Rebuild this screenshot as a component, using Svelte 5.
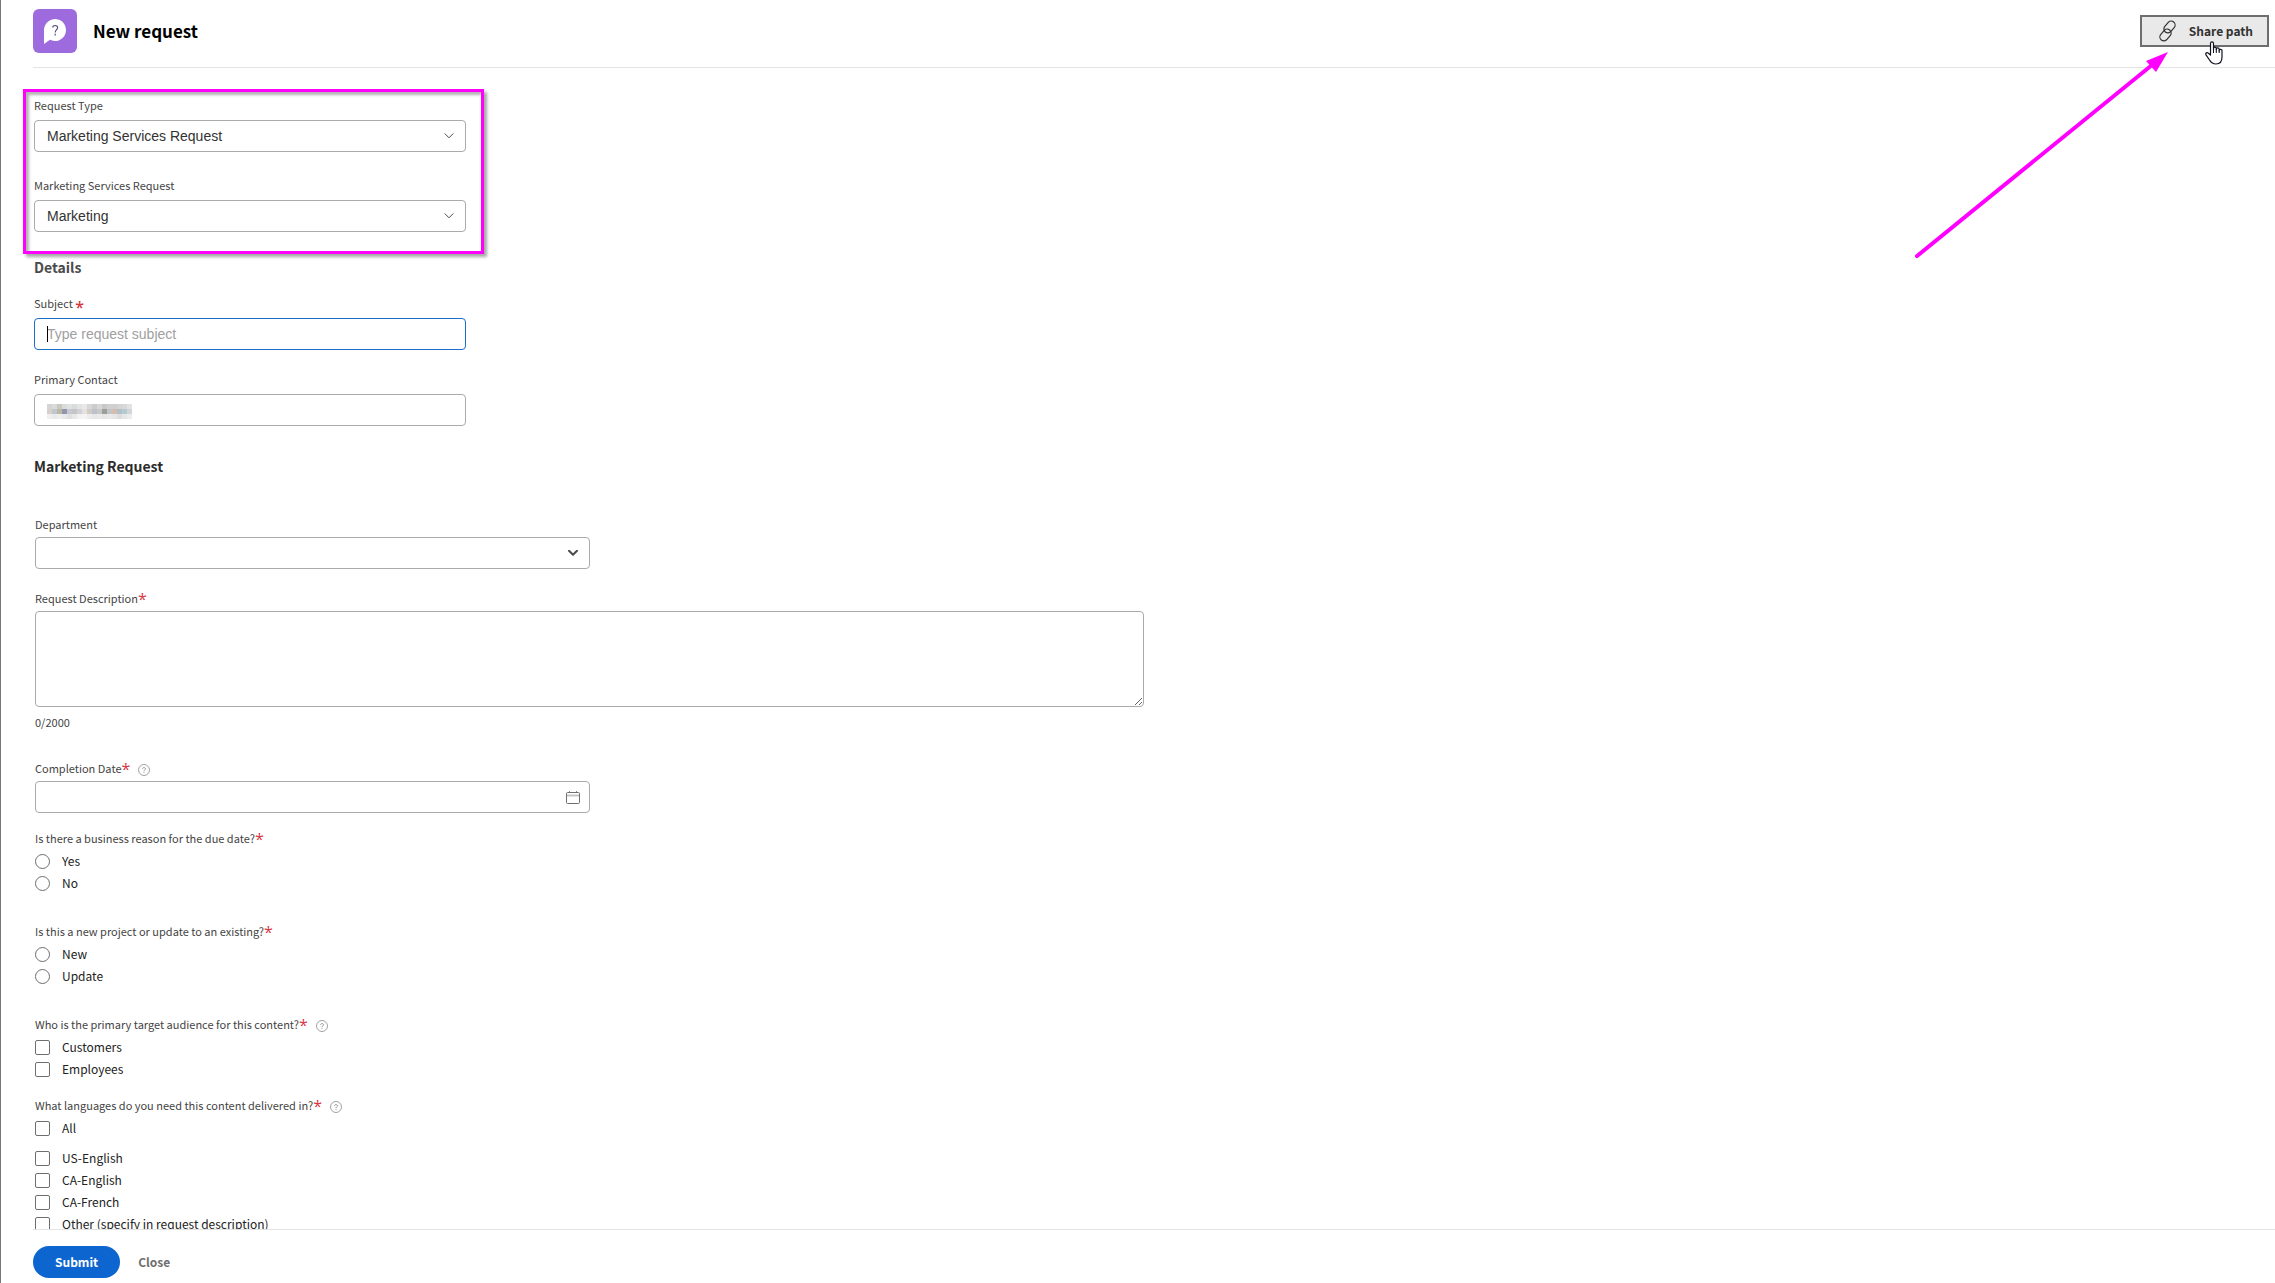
<script>
  let requestType = $state('Marketing Services Request')
  let service = $state('Marketing')
  let department = $state('')
  let description = $state('')

  const choices = [
    { id: 'reason', type: 'radio', label: 'Is there a business reason for the due date?', options: ['Yes', 'No'] },
    { id: 'project', type: 'radio', label: 'Is this a new project or update to an existing?', options: ['New', 'Update'], gap: 'wide' },
    { id: 'audience', type: 'checkbox', label: 'Who is the primary target audience for this content?', help: true, options: ['Customers', 'Employees'], gap: 'wide' },
    {
      id: 'languages',
      type: 'checkbox',
      label: 'What languages do you need this content delivered in?',
      help: true,
      all: true,
      options: ['US-English', 'CA-English', 'CA-French', 'Other (specify in request description)']
    }
  ]

  // blocked-out contact name, one row of shades per line of blocks
  const mosaic = [
    '#d4d4d6 #dadada #c8cabc #d8dcda #dfe2e2 #d9dcda #e4e4e4 #e8e8e8 #d8d8d8 #cccccc #d6d6d8 #c8c8c8 #d0d0d0 #cfcfcf #d4d4d4 #d8d8d8 #e2e2e2',
    '#d6d0c8 #c2c6d0 #b8baa4 #9494ac #c8c8d0 #c4c4c8 #d2d2d6 #e2e2e2 #d4ccc4 #bcc2cc #c8c8c8 #98a098 #c0c4c8 #d4bcb0 #b4c0c8 #b4ccd0 #d2d6d8',
    '#f0f0f0 #eaeaec #eeeeee #e8e8ea #e0e0e2 #e8e8e8 #f2f2f2 #f4f4f4 #ececec #e8e8e8 #eaeaea #e6e6e6 #eaeaea #e6e6e6 #dedee0 #e6e6e6 #ececec'
  ].map((row) => row.split(' '))
</script>

{#snippet chevron()}
  <svg class="chevron" viewBox="0 0 10 6" aria-hidden="true">
    <path d="M1 .8 5 4.8 9 .8" fill="none" stroke="currentColor" stroke-linecap="round" stroke-linejoin="round" />
  </svg>
{/snippet}

{#snippet help()}
  <button class="help" type="button" aria-label="Help">
    <svg viewBox="0 0 12 12" aria-hidden="true">
      <circle cx="6" cy="6" r="5.5" fill="none" stroke="currentColor" stroke-width=".8" />
      <path d="M4.5 4.7C4.5 3.2 7.5 3.2 7.5 4.8 7.5 5.8 6 5.9 6 7.2M6 8.2v.9" fill="none" stroke="currentColor" stroke-width=".9" />
    </svg>
  </button>
{/snippet}

{#snippet option(group, name)}
  <label class="option">
    <input type={group.type} name={group.id} value={name} />
    <span>{name}</span>
  </label>
{/snippet}

<div class="page">
  <header>
    <div class="badge">
      <svg viewBox="0 0 44 44" aria-hidden="true">
        <path d="M11 35V21a11 11 0 1 1 6 9.800L11 35Z" fill="#fff" />
        <path d="M19.700 18.400C19.700 15.800 24.600 15.800 24.600 18.600 24.600 21 22.200 21 22.200 23.600" fill="none" stroke="#4f4478" stroke-width="1.1" />
        <path d="M22.200 24.800v1.600" stroke="#4f4478" stroke-width="1.2" />
      </svg>
    </div>
    <h1>New request</h1>
    <button class="share" type="button">
      <svg viewBox="0 0 18 24" aria-hidden="true">
        <g fill="none" stroke="currentColor" stroke-width="1.2">
          <rect x="4" y="4" width="13" height="8" rx="4" transform="rotate(-50 10.5 8)" />
          <rect x="0" y="12" width="13" height="8" rx="4" transform="rotate(-50 6.5 16)" />
        </g>
      </svg>
      Share path
    </button>
  </header>

  <main>
    <form id="request">
      <section class="general">
        <div class="field">
          <label for="type">Request Type</label>
          <div class="control">
            <select id="type" bind:value={requestType}>
              <option>Marketing Services Request</option>
            </select>
            {@render chevron()}
          </div>
        </div>
        <div class="field service">
          <label for="service">Marketing Services Request</label>
          <div class="control">
            <select id="service" bind:value={service}>
              <option>Marketing</option>
            </select>
            {@render chevron()}
          </div>
        </div>

        <h2 class="details">Details</h2>
        <div class="field">
          <label for="subject">Subject <span class="star">*</span></label>
          <div class="control">
            <input id="subject" class="focused" type="text" placeholder="Type request subject" />
            <span class="caret"></span>
          </div>
        </div>
        <div class="field contact">
          <label for="contact">Primary Contact</label>
          <div class="control">
            <input id="contact" type="text" />
            <svg class="mosaic" viewBox="0 0 17 3" shape-rendering="crispEdges" aria-hidden="true">
              {#each mosaic as row, y}
                {#each row as shade, x}
                  <rect {x} {y} width="1" height="1" fill={shade} />
                {/each}
              {/each}
            </svg>
          </div>
        </div>
      </section>

      <h2 class="custom-title">Marketing Request</h2>
      <section class="custom">
        <div class="field">
          <label for="department">Department</label>
          <div class="control half">
            <select id="department" bind:value={department}>
              <option value=""></option>
            </select>
            {@render chevron()}
          </div>
        </div>
        <div class="field description">
          <label for="description">Request Description<span class="star">*</span></label>
          <textarea id="description" maxlength="2000" bind:value={description}></textarea>
          <p class="counter">{description.length}/2000</p>
        </div>
        <div class="field date">
          <div class="caption">
            <label for="date">Completion Date<span class="star">*</span></label>
            {@render help()}
          </div>
          <div class="control half">
            <input id="date" type="text" />
            <svg class="calendar" viewBox="0 0 14 13" aria-hidden="true">
              <path d="M3.5 0v2M10.5 0v2" stroke="#8a8a8a" />
              <path d="M1 4.5h12" stroke="#c4c4c4" stroke-width="2" />
              <rect x=".5" y="1.5" width="13" height="11" rx="1" fill="none" stroke="#6e6e6e" />
            </svg>
          </div>
        </div>

        {#each choices as group}
          <fieldset class:wide={group.gap === 'wide'}>
            <legend>
              <span>{group.label}<span class="star">*</span></span>
              {#if group.help}{@render help()}{/if}
            </legend>
            {#if group.all}
              <div class="all">{@render option(group, 'All')}</div>
            {/if}
            {#each group.options as name}
              {@render option(group, name)}
            {/each}
          </fieldset>
        {/each}
      </section>
    </form>
  </main>

  <footer>
    <button class="submit" type="submit" form="request">Submit</button>
    <button class="close" type="button">Close</button>
  </footer>

  <div class="highlight"></div>

  <svg class="arrow" viewBox="0 0 260 210" aria-hidden="true">
    <path d="M5 206 240 15" stroke="#f0f" stroke-width="4" stroke-linecap="round" />
    <path d="M256 2 234 11 244 22Z" fill="#f0f" />
  </svg>

  <svg class="pointer" viewBox="0 0 18 24" aria-hidden="true">
    <path
      d="M5.5 14V2.5C5.5.3 8.5.3 8.5 2.5V9 7.5C8.5 5.6 11.3 5.8 11.3 7.5V9 8.2C11.3 6.4 14.2 6.6 14.2 8.4V10 9.4C14.2 7.8 17 8 17 9.6V16C17 20 15 23 11 23 7.5 23 6 21.5 4.5 19L1 13.8C0 12 2.2 11 3.4 12.2Z"
      fill="#fff"
      stroke="#112"
      stroke-width="1.2"
      stroke-linejoin="round"
    />
    <path d="M8.5 8v4M11.3 8.5V12M14.2 9.5V12" stroke="#112" />
  </svg>
</div>

<style>
  :global(body) {
    margin: 0;
    background: #fff;
  }

  .page {
    --sans: 'Noto Sans CJK SC', 'Open Sans', sans-serif;
    position: relative;
    box-sizing: border-box;
    display: flex;
    flex-direction: column;
    height: 100vh;
    overflow: hidden;
    padding-left: 32px;
    border-left: 1px solid #777;
    font-family: var(--sans);
    font-size: 11px;
    line-height: 16px;
    color: #444;
  }

  header {
    display: flex;
    align-items: center;
    flex: none;
    height: 44px;
    padding: 9px 6px 14px 0;
    border-bottom: 1px solid #e4e4e4;
  }

  .badge {
    width: 44px;
    height: 44px;
    border-radius: 6px;
    background: #9d6bdd;
  }

  .badge svg {
    display: block;
  }

  h1 {
    flex: 1;
    margin: 0 0 0 16px;
    font-size: 17px;
    line-height: 24px;
    font-weight: 700;
    color: #000;
  }

  button {
    font-family: var(--sans);
    cursor: pointer;
  }

  .share {
    display: flex;
    align-items: center;
    gap: 12px;
    height: 32px;
    padding: 0 14px 0 17px;
    border: 2px solid #6e6e6e;
    background: #e9e9e9;
    color: #323232;
    font-size: 12px;
    line-height: 20px;
    font-weight: 700;
  }

  .share svg {
    width: 18px;
    height: 24px;
  }

  main {
    flex: 1;
    min-height: 0;
    overflow: hidden;
  }

  form {
    padding: 29px 0 0 1px;
  }

  .general {
    max-width: 432px;
  }

  .custom {
    max-width: 1109px;
    padding-left: 1px;
  }

  .field label,
  .field .caption {
    display: block;
    margin-bottom: 7px;
  }

  .field .caption {
    display: flex;
  }

  .custom .field label,
  .custom .field .caption {
    margin-bottom: 5px;
  }

  .custom .field .caption label {
    margin: 0;
  }

  .service {
    margin-top: 25px;
  }

  h2 {
    margin: 0;
    font-size: 14px;
    line-height: 20px;
    font-weight: 700;
    color: #2c2c2c;
  }

  .details {
    margin: 25px 0 18px;
    color: #4b4b4b;
  }

  .custom-title {
    margin: 30px 0 40px;
  }

  .contact {
    margin-top: 21px;
  }

  .description {
    margin-top: 21px;
  }

  .date {
    margin-top: 30px;
  }

  .star {
    font-family: 'Open Sans', sans-serif;
    font-size: 16px;
    line-height: 0;
    vertical-align: -2px;
    color: #d7373f;
  }

  .general .star {
    font-weight: 600;
    vertical-align: -5px;
  }

  .control {
    position: relative;
    display: flex;
  }

  .half {
    width: 50%;
  }

  select,
  input[type='text'],
  textarea {
    box-sizing: border-box;
    width: 100%;
    height: 32px;
    margin: 0;
    padding: 0 12px;
    border: 1px solid #aaa;
    border-radius: 4px;
    background: #fff;
    color: #323232;
    font-family: 'Liberation Sans', Arial, sans-serif;
    font-size: 14px;
    outline: none;
    appearance: none;
  }

  input::placeholder {
    color: #a0a0a0;
    opacity: 1;
  }

  input.focused {
    border-color: #1b6fc8;
  }

  textarea {
    display: block;
    height: 96px;
    resize: both;
  }

  .caret {
    position: absolute;
    left: 13px;
    top: 8px;
    width: 1px;
    height: 16px;
    background: #000;
  }

  .chevron {
    position: absolute;
    right: 12px;
    top: 13px;
    width: 10px;
    height: 6px;
    color: #4b4b4b;
    pointer-events: none;
  }

  .custom .chevron {
    stroke-width: 2px;
  }

  .calendar {
    position: absolute;
    right: 10px;
    top: 10px;
    width: 14px;
    height: 13px;
    pointer-events: none;
  }

  .mosaic {
    position: absolute;
    left: 13px;
    top: 10px;
    width: 85px;
    height: 15px;
  }

  .counter {
    margin: 7px 0 0;
  }

  .help {
    width: 12px;
    height: 12px;
    margin: 4px 0 0 8px;
    padding: 0;
    border: 0;
    background: none;
    color: #8a8a8a;
  }

  .help svg {
    display: block;
  }

  fieldset {
    margin: 17px 0 0;
    padding: 0;
    border: 0;
  }

  fieldset.wide {
    margin-top: 29px;
  }

  legend {
    display: flex;
    height: 16px;
    margin-bottom: 4px;
    padding: 0;
  }

  .option {
    display: flex;
    align-items: center;
    gap: 12px;
    height: 22px;
    font-size: 12px;
    line-height: 20px;
    color: #222;
  }

  .option input {
    box-sizing: border-box;
    width: 15px;
    height: 15px;
    margin: 0;
    border: 1px solid #6e6e6e;
    border-radius: 2px;
    background: #fff;
    appearance: none;
  }

  .option input[type='radio'] {
    border-radius: 50%;
  }

  .option input:checked {
    background: #0d66d0;
  }

  .all {
    margin-bottom: 8px;
  }

  footer {
    display: flex;
    align-items: center;
    gap: 18px;
    flex: none;
    padding: 16px 0 5px;
    border-top: 1px solid #e4e4e4;
  }

  footer button {
    height: 32px;
    border: 0;
    background: none;
    font-size: 12px;
    line-height: 20px;
    font-weight: 700;
  }

  .submit {
    padding: 0 22px;
    border-radius: 16px;
    background: #0d66d0;
    color: #fff;
  }

  .close {
    padding: 0;
    color: #6e6e6e;
  }

  .highlight {
    position: absolute;
    left: 22px;
    top: 89px;
    box-sizing: border-box;
    width: 461px;
    height: 165px;
    border: 3px solid #f0f;
    box-shadow: 3px 3px 3px rgba(0, 0, 0, 0.35), inset 3px 3px 3px rgba(0, 0, 0, 0.3);
    pointer-events: none;
  }

  .arrow {
    position: absolute;
    right: 103px;
    top: 50px;
    width: 260px;
    height: 210px;
    pointer-events: none;
  }

  .pointer {
    position: absolute;
    right: 52px;
    top: 41px;
    width: 18px;
    height: 24px;
    pointer-events: none;
  }
</style>
